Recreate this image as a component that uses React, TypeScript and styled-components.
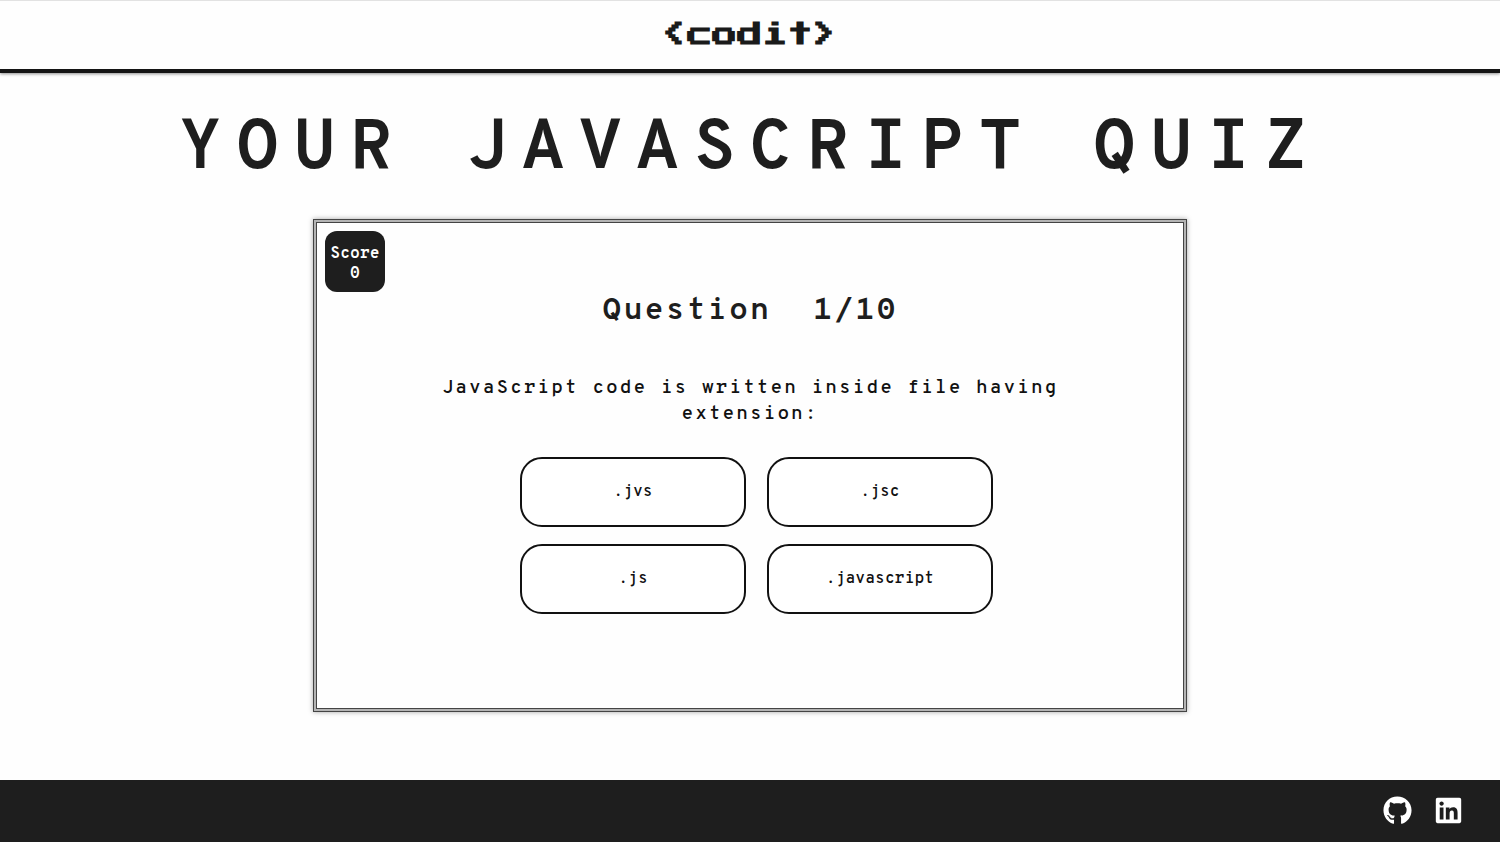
import React, { useState } from "react";
import styled, { createGlobalStyle } from "styled-components";
import { FaGithub, FaLinkedin } from "react-icons/fa";

const GlobalStyle = createGlobalStyle`
  * {
    box-sizing: border-box;
  }

  body {
    margin: 0;
    background: #fefefe;
    color: #1e1e1e;
    font-family: "Overpass Mono", "DejaVu Sans Mono", monospace;
  }
`;

const Page = styled.div`
  display: flex;
  flex-direction: column;
  min-height: 100vh;
`;

const Header = styled.header`
  display: flex;
  justify-content: center;
  padding: 14px 0 15px;
  border-top: 1px solid #e2e2e2;
  border-bottom: 4px solid #141414;
  box-shadow: 0 1px 3px rgba(0, 0, 0, 0.45);
`;

const Logo = styled.a`
  color: #1a1a1a;
  font-family: "Press Start 2P", "DejaVu Sans Mono", monospace;
  font-size: 25px;
  font-weight: 700;
  line-height: 39px;
  text-decoration: none;
`;

const Main = styled.main`
  display: flex;
  flex: 1;
  flex-direction: column;
  align-items: center;
  padding: 38px 24px 68px;
`;

const Title = styled.h1`
  margin: 0 0 28px;
  font-size: 70px;
  font-weight: 700;
  line-height: 80px;
  letter-spacing: 14px;
  text-align: center;
  text-transform: uppercase;
`;

const Card = styled.section`
  display: flex;
  flex: 1;
  flex-direction: column;
  align-items: center;
  width: 100%;
  max-width: 874px;
  padding: 8px;
  border: 4px double #444444;
  background:
    linear-gradient(#fefefe, #fefefe) padding-box,
    linear-gradient(#b4b4b4, #b4b4b4) border-box;
  box-shadow: 0 0 5px rgba(0, 0, 0, 0.35);
`;

const Score = styled.div`
  display: flex;
  flex-direction: column;
  align-items: center;
  align-self: flex-start;
  width: 60px;
  padding: 13px 0 8px;
  border-radius: 12px;
  background: #1e1e1e;
  color: #ffffff;
  font-size: 16px;
  font-weight: 700;
  line-height: 20px;
`;

const QuestionCount = styled.h2`
  margin: 0 0 43px;
  font-size: 31px;
  font-weight: 700;
  line-height: 40px;
  letter-spacing: 2px;
  white-space: pre-wrap;
`;

const Question = styled.p`
  max-width: 640px;
  margin: 0 0 30px;
  color: #111111;
  font-size: 19px;
  font-weight: 600;
  line-height: 26px;
  letter-spacing: 2px;
  text-align: center;
`;

const Options = styled.div`
  display: grid;
  grid-template-columns: repeat(2, 226px);
  gap: 17px 21px;
  padding-left: 13px;
`;

const Option = styled.button`
  height: 70px;
  border: 2px solid #111111;
  border-radius: 22px;
  background: #ffffff;
  color: #111111;
  font-family: inherit;
  font-size: 16px;
  font-weight: 600;
  cursor: pointer;
`;

const Footer = styled.footer`
  display: flex;
  justify-content: flex-end;
  align-items: center;
  gap: 22px;
  height: 62px;
  padding: 0 37px 2px;
  background: #1e1e1e;
`;

const SocialLink = styled.a`
  display: flex;
  color: #ffffff;
  font-size: 29px;
`;

const quiz = [
  {
    question: "JavaScript code is written inside file having extension:",
    options: [".jvs", ".jsc", ".js", ".javascript"],
    answer: ".js",
  },
];

const totalQuestions = 10;

export default function App() {
  const [score, setScore] = useState(0);
  const { question, options, answer } = quiz[0];

  return (
    <Page>
      <GlobalStyle />
      <Header>
        <Logo href="#">&lt;codit&gt;</Logo>
      </Header>
      <Main>
        <Title>Your JavaScript Quiz</Title>
        <Card>
          <Score>
            <span>Score</span>
            <span>{score}</span>
          </Score>
          <QuestionCount>{`Question  1/${totalQuestions}`}</QuestionCount>
          <Question>{question}</Question>
          <Options>
            {options.map((option) => (
              <Option
                key={option}
                type="button"
                onClick={() => setScore(option === answer ? 1 : 0)}
              >
                {option}
              </Option>
            ))}
          </Options>
        </Card>
      </Main>
      <Footer>
        <SocialLink href="#github" aria-label="GitHub">
          <FaGithub aria-hidden="true" />
        </SocialLink>
        <SocialLink href="#linkedin" aria-label="LinkedIn">
          <FaLinkedin aria-hidden="true" />
        </SocialLink>
      </Footer>
    </Page>
  );
}
